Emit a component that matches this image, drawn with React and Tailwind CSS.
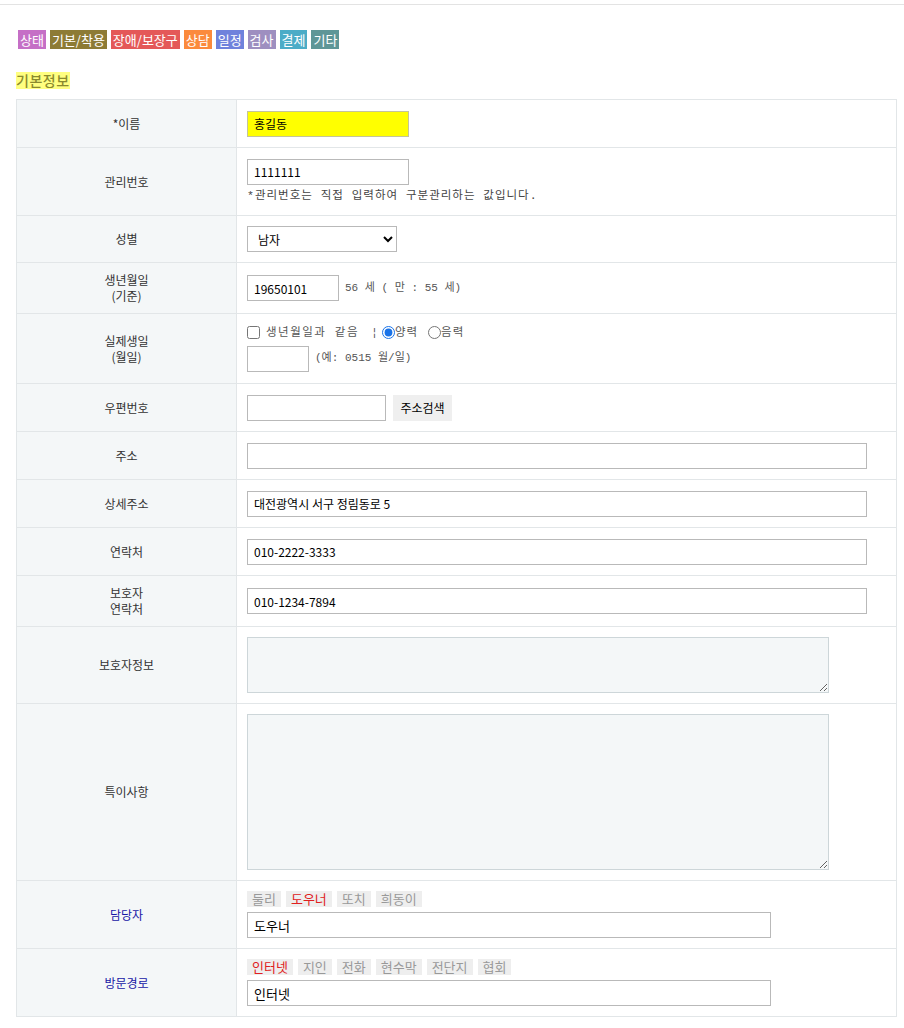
import React from 'react';

const tags = [
  { label: '상태', cls: 'bg-[#c56fc6]' },
  { label: '기본/착용', cls: 'bg-[#8d7b35]' },
  { label: '장애/보장구', cls: 'bg-[#e45858]' },
  { label: '상담', cls: 'bg-[#fb8a3c]' },
  { label: '일정', cls: 'bg-[#6f82dc]' },
  { label: '검사', cls: 'bg-[#9e8fc0]' },
  { label: '결제', cls: 'bg-[#4bacc7]' },
  { label: '기타', cls: 'bg-[#5e9697]' },
];

const managers = ['둘리', '도우너', '또치', '희동이'];
const routes = ['인터넷', '지인', '전화', '현수막', '전단지', '협회'];

const sans = "font-['Noto_Sans_CJK_KR','Noto_Sans',sans-serif]";
const mono = "font-['Liberation_Mono','Noto_Sans_CJK_KR',monospace]";

const inputCls = 'h-[26px] border px-[6px] text-[12px] text-black outline-none';

const Row = ({ label, h, blue, children }) => (
  <tr className={h}>
    <th
      className={`w-[220px] border border-[#e2e6e8] bg-[#f4f7f8] text-center align-middle text-[12px] font-normal leading-[16px] ${
        blue ? 'text-[#1717a6]' : 'text-[#333]'
      }`}
    >
      {label}
    </th>
    <td className="border border-[#e2e6e8] bg-white px-[10px] align-middle">{children}</td>
  </tr>
);

const Chips = ({ items, active }) => (
  <div className="flex gap-[5px]">
    {items.map((c) => (
      <span
        key={c}
        className={`h-[16px] bg-[#eeeeee] px-[5px] text-[13px] leading-[16px] ${
          c === active ? 'text-[#e02020]' : 'text-[#999]'
        }`}
      >
        {c}
      </span>
    ))}
  </div>
);

export default function App() {
  return (
    <div className={`min-h-[1028px] bg-white ${sans}`}>
      <div className="pt-[4px]">
        <div className="border-t border-[#e3e3e3]" />
      </div>

      <div className="flex gap-[4px] px-[18px] pt-[25px]">
        {tags.map((t) => (
          <span key={t.label} className={`h-[19px] px-[2px] text-[13px] leading-[19px] text-white ${t.cls}`}>
            {t.label}
          </span>
        ))}
      </div>

      <div className="flex px-[16px] pt-[23px]">
        <span className="h-[17px] bg-[#ffff80] text-[14px] font-medium leading-[17px] tracking-[0.5px] text-[#8a8a2e]">기본정보</span>
      </div>

      <div className="px-[16px] pt-[10px]">
        <table className="w-[881px] border-collapse">
          <tbody>
            <Row label="*이름" h="h-[48px]">
              <input className={`${inputCls} w-[162px] border-[#c4c49a] bg-[#ffff00]`} defaultValue="홍길동" />
            </Row>
            <Row label="관리번호" h="h-[68px]">
              <div className="flex flex-col gap-[4px] pb-[2px]">
                <input className={`${inputCls} w-[162px] border-[#b9b9b9] bg-white`} defaultValue="1111111" />
                <span className={`${mono} text-[11.5px] leading-[14px] tracking-[1px] text-[#444]`}>
                  *관리번호는 직접 입력하여 구분관리하는 값입니다.
                </span>
              </div>
            </Row>
            <Row label="성별" h="h-[47px]">
              <select className={`${inputCls} w-[150px] border-[#b9b9b9] bg-white px-[2px]`} defaultValue="남자">
                <option>남자</option>
                <option>여자</option>
              </select>
            </Row>
            <Row
              label={
                <>
                  생년월일
                  <br />
                  (기준)
                </>
              }
              h="h-[51px]"
            >
              <div className="flex items-center gap-[6px]">
                <input className={`${inputCls} w-[92px] border-[#b9b9b9] bg-white`} defaultValue="19650101" />
                <span className={`${mono} text-[11px] text-[#555]`}>56 세 ( 만 : 55 세)</span>
              </div>
            </Row>
            <Row
              label={
                <>
                  실제생일
                  <br />
                  (월일)
                </>
              }
              h="h-[70px]"
            >
              <div className="flex flex-col gap-[6px]">
                <div className={`${mono} flex items-center text-[11.5px] leading-[14px] text-[#555]`}>
                  <input type="checkbox" className="m-0 mr-[6px] h-[13px] w-[13px]" />
                  <span className="tracking-[1.5px]">생년월일과 같음</span>
                  <span className="ml-[12px]">¦</span>
                  <input type="radio" name="cal" defaultChecked className="m-0 ml-[4px] h-[13px] w-[13px] accent-[#1a73e8]" />
                  <span className="tracking-[1px]">양력</span>
                  <input type="radio" name="cal" className="m-0 ml-[10px] h-[13px] w-[13px]" />
                  <span className="tracking-[1px]">음력</span>
                </div>
                <div className="flex items-center gap-[6px]">
                  <input className={`${inputCls} w-[62px] border-[#b9b9b9] bg-white`} />
                  <span className={`${mono} text-[11px] text-[#555]`}>(예: 0515 월/일)</span>
                </div>
              </div>
            </Row>
            <Row label="우편번호" h="h-[48px]">
              <div className="flex items-center gap-[7px]">
                <input className={`${inputCls} w-[139px] border-[#b9b9b9] bg-white`} />
                <button className="h-[26px] w-[59px] bg-[#efefef] text-[12px] font-normal text-black">주소검색</button>
              </div>
            </Row>
            <Row label="주소" h="h-[48px]">
              <input className={`${inputCls} w-[620px] border-[#b9b9b9] bg-white`} />
            </Row>
            <Row label="상세주소" h="h-[48px]">
              <input className={`${inputCls} w-[620px] border-[#b9b9b9] bg-white`} defaultValue="대전광역시 서구 정림동로 5" />
            </Row>
            <Row label="연락처" h="h-[48px]">
              <input className={`${inputCls} w-[620px] border-[#b9b9b9] bg-white`} defaultValue="010-2222-3333" />
            </Row>
            <Row
              label={
                <>
                  보호자
                  <br />
                  연락처
                </>
              }
              h="h-[51px]"
            >
              <input className={`${inputCls} w-[620px] border-[#b9b9b9] bg-white`} defaultValue="010-1234-7894" />
            </Row>
            <Row label="보호자정보" h="h-[77px]">
              <textarea className="block h-[56px] w-[582px] border border-[#cdd6d9] bg-[#f4f7f8] outline-none" />
            </Row>
            <Row label="특이사항" h="h-[177px]">
              <textarea className="block h-[156px] w-[582px] border border-[#cdd6d9] bg-[#f4f7f8] outline-none" />
            </Row>
            <Row label="담당자" h="h-[68px]" blue>
              <div className="flex flex-col gap-[5px]">
                <Chips items={managers} active="도우너" />
                <input className={`${inputCls} w-[524px] border-[#b9b9b9] bg-white text-[13px]`} defaultValue="도우너" />
              </div>
            </Row>
            <Row label="방문경로" h="h-[68px]" blue>
              <div className="flex flex-col gap-[5px]">
                <Chips items={routes} active="인터넷" />
                <input className={`${inputCls} w-[524px] border-[#b9b9b9] bg-white text-[13px]`} defaultValue="인터넷" />
              </div>
            </Row>
          </tbody>
        </table>
      </div>
    </div>
  );
}
